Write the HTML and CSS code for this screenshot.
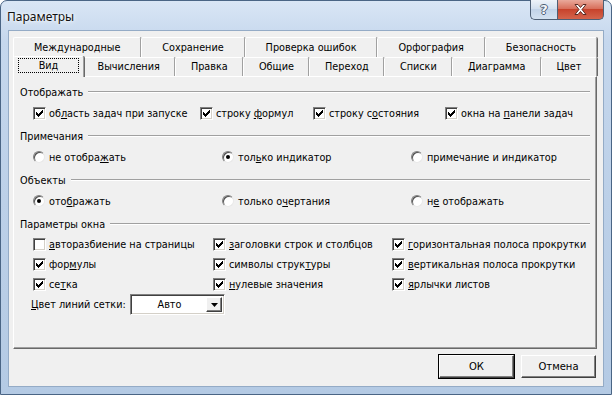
FILE: index.html
```html
<!DOCTYPE html>
<html lang="ru">
<head>
  <meta charset="UTF-8">
  <title>Параметры</title>
  <link rel="stylesheet" href="styles.css">
</head>
<body>
  <div class="window">
    <div class="titlebar">
      <span class="title">Параметры</span>
      <div class="caption-buttons">
        <div class="cap-btn help">?</div>
        <div class="cap-btn close">
          <svg width="13" height="11" viewBox="0 0 13 11">
            <path d="M1 0.5h3l2.5 3 2.5-3h3l-4 5 4 5h-3l-2.5-3-2.5 3h-3l4-5z" fill="#fff" stroke="#5a2a22" stroke-width="1"/>
          </svg>
        </div>
      </div>
    </div>

    <div class="client">
      <div class="tabs">
        <div class="tab-row">
          <div class="tab">Международные</div>
          <div class="tab">Сохранение</div>
          <div class="tab">Проверка ошибок</div>
          <div class="tab">Орфография</div>
          <div class="tab">Безопасность</div>
        </div>
        <div class="tab-row front">
          <div class="tab selected"><span class="focus">Вид</span></div>
          <div class="tab">Вычисления</div>
          <div class="tab">Правка</div>
          <div class="tab">Общие</div>
          <div class="tab">Переход</div>
          <div class="tab">Списки</div>
          <div class="tab">Диаграмма</div>
          <div class="tab">Цвет</div>
        </div>

        <div class="panel">
          <div class="group-title">Отображать</div>
          <div class="opts show-row">
            <label class="chk"><span class="box"><svg width="7" height="7" viewBox="0 0 7 7"><path d="M0 2h1v1h1v1h1v-1h1v-1h1v-1h1v-1h1v3h-1v1h-1v1h-1v1h-1v1h-1v-1h-1v-1h-1z"/></svg></span><span>об<u>л</u>асть задач при запуске</span></label>
            <label class="chk"><span class="box"><svg width="7" height="7" viewBox="0 0 7 7"><path d="M0 2h1v1h1v1h1v-1h1v-1h1v-1h1v-1h1v3h-1v1h-1v1h-1v1h-1v1h-1v-1h-1v-1h-1z"/></svg></span><span>строку <u>ф</u>ормул</span></label>
            <label class="chk"><span class="box"><svg width="7" height="7" viewBox="0 0 7 7"><path d="M0 2h1v1h1v1h1v-1h1v-1h1v-1h1v-1h1v3h-1v1h-1v1h-1v1h-1v1h-1v-1h-1v-1h-1z"/></svg></span><span>строку с<u>о</u>стояния</span></label>
            <label class="chk"><span class="box"><svg width="7" height="7" viewBox="0 0 7 7"><path d="M0 2h1v1h1v1h1v-1h1v-1h1v-1h1v-1h1v3h-1v1h-1v1h-1v1h-1v1h-1v-1h-1v-1h-1z"/></svg></span><span>окна на <u>п</u>анели задач</span></label>
          </div>

          <div class="group-title">Примечания</div>
          <div class="opts radio-row">
            <label class="chk"><span class="radio"></span><span>не отобра<u>ж</u>ать</span></label>
            <label class="chk"><span class="radio on"></span><span>тол<u>ь</u>ко индикатор</span></label>
            <label class="chk"><span class="radio"></span><span>примечание и ин<u>д</u>икатор</span></label>
          </div>

          <div class="group-title">Объекты</div>
          <div class="opts radio-row">
            <label class="chk"><span class="radio on"></span><span>ото<u>б</u>ражать</span></label>
            <label class="chk"><span class="radio"></span><span>только о<u>ч</u>ертания</span></label>
            <label class="chk"><span class="radio"></span><span>н<u>е</u> отображать</span></label>
          </div>

          <div class="group-title">Параметры окна</div>
          <div class="opts window-grid">
            <label class="chk"><span class="box"></span><span><u>а</u>вторазбиение на страницы</span></label>
            <label class="chk"><span class="box"><svg width="7" height="7" viewBox="0 0 7 7"><path d="M0 2h1v1h1v1h1v-1h1v-1h1v-1h1v-1h1v3h-1v1h-1v1h-1v1h-1v1h-1v-1h-1v-1h-1z"/></svg></span><span><u>з</u>аголовки строк и столбцов</span></label>
            <label class="chk"><span class="box"><svg width="7" height="7" viewBox="0 0 7 7"><path d="M0 2h1v1h1v1h1v-1h1v-1h1v-1h1v-1h1v3h-1v1h-1v1h-1v1h-1v1h-1v-1h-1v-1h-1z"/></svg></span><span><u>г</u>оризонтальная полоса прокрутки</span></label>
            <label class="chk"><span class="box"><svg width="7" height="7" viewBox="0 0 7 7"><path d="M0 2h1v1h1v1h1v-1h1v-1h1v-1h1v-1h1v3h-1v1h-1v1h-1v1h-1v1h-1v-1h-1v-1h-1z"/></svg></span><span>фор<u>м</u>улы</span></label>
            <label class="chk"><span class="box"><svg width="7" height="7" viewBox="0 0 7 7"><path d="M0 2h1v1h1v1h1v-1h1v-1h1v-1h1v-1h1v3h-1v1h-1v1h-1v1h-1v1h-1v-1h-1v-1h-1z"/></svg></span><span>символы струк<u>т</u>уры</span></label>
            <label class="chk"><span class="box"><svg width="7" height="7" viewBox="0 0 7 7"><path d="M0 2h1v1h1v1h1v-1h1v-1h1v-1h1v-1h1v3h-1v1h-1v1h-1v1h-1v1h-1v-1h-1v-1h-1z"/></svg></span><span><u>в</u>ертикальная полоса прокрутки</span></label>
            <label class="chk"><span class="box"><svg width="7" height="7" viewBox="0 0 7 7"><path d="M0 2h1v1h1v1h1v-1h1v-1h1v-1h1v-1h1v3h-1v1h-1v1h-1v1h-1v1h-1v-1h-1v-1h-1z"/></svg></span><span>се<u>т</u>ка</span></label>
            <label class="chk"><span class="box"><svg width="7" height="7" viewBox="0 0 7 7"><path d="M0 2h1v1h1v1h1v-1h1v-1h1v-1h1v-1h1v3h-1v1h-1v1h-1v1h-1v1h-1v-1h-1v-1h-1z"/></svg></span><span><u>н</u>улевые значения</span></label>
            <label class="chk"><span class="box"><svg width="7" height="7" viewBox="0 0 7 7"><path d="M0 2h1v1h1v1h1v-1h1v-1h1v-1h1v-1h1v3h-1v1h-1v1h-1v1h-1v1h-1v-1h-1v-1h-1z"/></svg></span><span><u>я</u>рлычки листов</span></label>
          </div>

          <div class="grid-color">
            <span class="grid-color-label"><u>Ц</u>вет линий сетки:</span>
            <div class="combo">
              <span class="combo-value">Авто</span>
              <span class="combo-arrow">
                <svg width="7" height="4" viewBox="0 0 7 4"><path d="M0 0h7L3.5 4z"/></svg>
              </span>
            </div>
          </div>
        </div>
      </div>

      <div class="buttons">
        <button class="btn default">ОК</button>
        <button class="btn">Отмена</button>
      </div>
    </div>
  </div>
</body>
</html>
```

FILE: styles.css
```css
* {
  box-sizing: border-box;
}
body {
  margin: 0;
  font-family: "DejaVu Sans", sans-serif;
  font-size: 9.7px;
  color: #000;
  background: #fff;
}
.window {
  width: 612px;
  height: 395px;
  display: flex;
  flex-direction: column;
  padding: 0 7px 7px;
  border: 1px solid #4a6585;
  border-radius: 7px 7px 0 0;
  background: linear-gradient(to bottom, #d9e6f5, #c5d7ed 40px, #bcd0e8 200px, #b4cae4);
}
.titlebar {
  height: 29px;
  display: flex;
  justify-content: space-between;
  align-items: flex-start;
}
.title {
  margin: 7px 0 0 -1px;
  font-family: "Noto Sans", sans-serif;
  font-size: 12px;
  color: #111;
  text-shadow: 0 0 6px #fff, 0 0 3px #fff;
}
.caption-buttons {
  display: flex;
  margin-top: -1px;
}
.cap-btn {
  height: 20px;
  display: flex;
  align-items: center;
  justify-content: center;
  border: 1px solid #4e5f75;
  border-top: none;
}
.help {
  width: 27px;
  border-right: none;
  border-radius: 0 0 0 5px;
  background: linear-gradient(to bottom, #eef3f9, #d3e0ef 45%, #c2d3e8 50%, #d3e1f1);
  font-family: "DejaVu Sans", sans-serif;
  font-weight: bold;
  font-size: 13px;
  color: #f4f7fb;
  text-shadow: 1px 0 #4e5f75, -1px 0 #4e5f75, 0 1px #4e5f75, 0 -1px #4e5f75;
}
.close {
  width: 47px;
  border-radius: 0 0 5px 0;
  background: linear-gradient(to bottom, #e9a99b, #d8705c 45%, #c7432c 50%, #d4644c);
}

.client {
  flex: 1;
  display: flex;
  flex-direction: column;
  padding: 6px 6px 8px 4px;
  background: #f0f0f0;
  border: 1px solid #94abc6;
}
.tabs {
  flex: 1;
  display: flex;
  flex-direction: column;
}
.tab-row {
  display: flex;
  height: 20px;
}
.tab-row.front {
  height: 19px;
}
.tab {
  flex: 1 1 auto;
  padding: 0 8px;
  text-align: center;
  line-height: 19px;
  white-space: nowrap;
  border-top: 1px solid #fff;
  border-left: 1px solid #fff;
  border-right: 1px solid #a0a0a0;
  box-shadow: 1px 0 0 #696969;
  border-radius: 2px 2px 0 0;
}
.tab-row.front .tab {
  line-height: 18px;
}
.tab.selected {
  position: relative;
  z-index: 1;
  flex: 0 0 71px;
  margin: -1px -2px -1px 0;
  padding: 1px 4px 0;
  background: #f0f0f0;
}
.focus {
  display: block;
  height: 15px;
  line-height: 13px;
  border: 1px dotted #000;
}

.panel {
  flex: 1;
  padding: 8px 6px 0;
  border: 1px solid;
  border-color: #fff #696969 #696969 #fff;
  box-shadow: inset -1px -1px 0 #a0a0a0;
}
.group-title {
  display: flex;
  align-items: center;
  gap: 5px;
  height: 14px;
}
.group-title::after {
  content: "";
  flex: 1;
  border-top: 1px solid #a0a0a0;
  border-bottom: 1px solid #fff;
}
.opts {
  display: grid;
  grid-auto-rows: 20px;
  margin: 4px 0 6px;
  padding-left: 13px;
}
.show-row {
  grid-template-columns: 167px 113px 132px auto;
}
.radio-row {
  grid-template-columns: 189px 189px auto;
}
.window-grid {
  grid-template-columns: 180px 179px auto;
  margin: 3px 0 0;
}
.chk {
  display: flex;
  align-items: center;
  gap: 3px;
  white-space: nowrap;
}
.box {
  width: 13px;
  height: 13px;
  display: flex;
  align-items: center;
  justify-content: center;
  background: #fff;
  border: 1px solid;
  border-color: #808080 #fff #fff #808080;
  box-shadow: inset 1px 1px 0 #404040, inset -1px -1px 0 #d4d0c8;
}
.box svg {
  display: block;
  shape-rendering: crispEdges;
}
.radio {
  position: relative;
  width: 12px;
  height: 12px;
  margin-right: 1px;
  border-radius: 50%;
  background: #fff;
  border: 1px solid;
  border-color: #808080 #e8e8e8 #e8e8e8 #808080;
  box-shadow: inset 1px 1px 0 #505050;
}
.radio.on::after {
  content: "";
  position: absolute;
  left: 3px;
  top: 3px;
  width: 4px;
  height: 4px;
  border-radius: 50%;
  background: #000;
}

.grid-color {
  display: flex;
  align-items: center;
  height: 21px;
  padding-left: 11px;
}
.grid-color-label {
  width: 99px;
}
.combo {
  width: 95px;
  height: 21px;
  display: flex;
  padding: 2px;
  background: #fff;
  border: 1px solid;
  border-color: #808080 #fff #fff #808080;
  box-shadow: inset 1px 1px 0 #404040, inset -1px -1px 0 #d4d0c8;
}
.combo-value {
  flex: 1;
  text-align: center;
  line-height: 15px;
}
.combo-arrow {
  width: 16px;
  display: flex;
  align-items: center;
  justify-content: center;
  background: #f0f0f0;
  border: 1px solid;
  border-color: #fff #404040 #404040 #fff;
  box-shadow: inset -1px -1px 0 #808080;
}

.buttons {
  display: flex;
  justify-content: flex-end;
  gap: 7px;
  margin-top: 6px;
  padding-right: 1px;
}
.btn {
  width: 75px;
  height: 23px;
  font-family: inherit;
  font-size: 10px;
  color: #000;
  background: #f0f0f0;
  border: 1px solid;
  border-color: #fff #404040 #404040 #fff;
  box-shadow: inset -1px -1px 0 #808080;
}
.btn.default {
  outline: 1px solid #000;
}
```
